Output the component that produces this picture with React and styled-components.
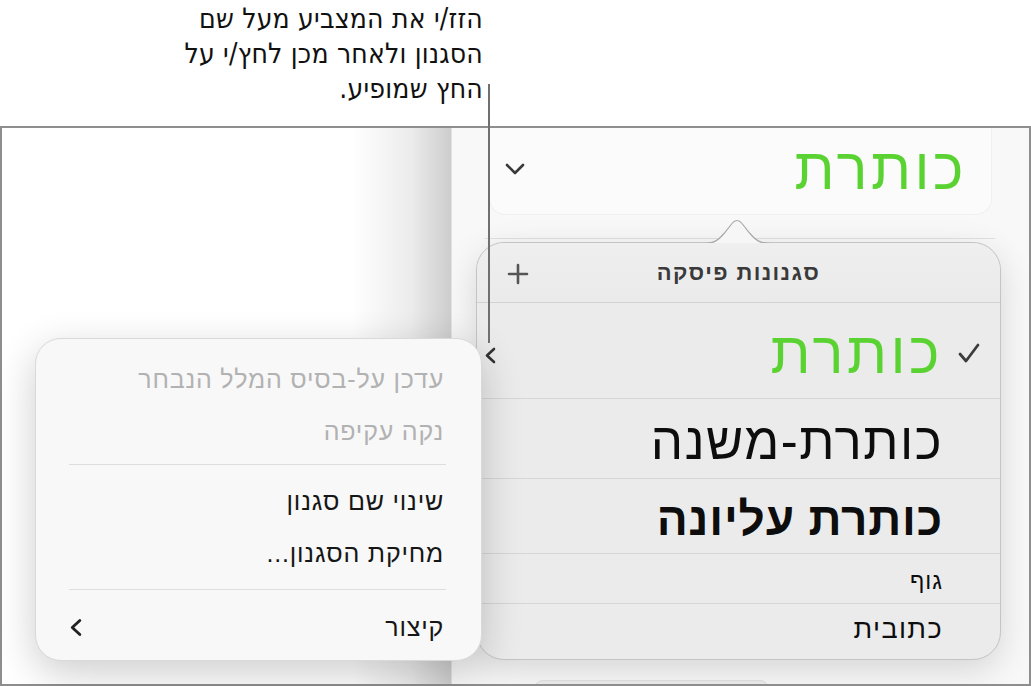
import styled, { createGlobalStyle } from 'styled-components';

const GlobalStyle = createGlobalStyle`
  html, body {
    margin: 0;
    padding: 0;
    background: #ffffff;
    overflow: hidden;
  }
  body {
    font-family: "Liberation Sans", Arial, sans-serif;
    color: #111;
  }
`;

const GREEN = '#5ad332';

const ChevronDown = () => (
  <svg width="20" height="12" viewBox="0 0 20 12">
    <polyline points="2,2 10,10 18,2" fill="none" stroke="#3a3a3a" strokeWidth="2.6" strokeLinecap="round" strokeLinejoin="round" />
  </svg>
);

const ChevronLeft = ({ w = 12, h = 17, color = '#333' }) => (
  <svg width={w} height={h} viewBox="0 0 12 17">
    <polyline points="10,2 3,8.5 10,15" fill="none" stroke={color} strokeWidth="2.6" strokeLinecap="round" strokeLinejoin="round" />
  </svg>
);

const Plus = () => (
  <svg width="22" height="22" viewBox="0 0 22 22">
    <path d="M11 2 V20 M2 11 H20" stroke="#555" strokeWidth="2.6" strokeLinecap="round" />
  </svg>
);

const Check = () => (
  <svg width="24" height="22" viewBox="0 0 24 22">
    <polyline points="3,12 9,19 21,3" fill="none" stroke="#3c3c3c" strokeWidth="2.8" strokeLinecap="round" strokeLinejoin="round" />
  </svg>
);

const PopArrow = () => (
  <svg width="68" height="27" viewBox="0 0 68 27">
    <path d="M0 26 C11 26 15 23 21 16 L29 6 C32 2 36 2 39 6 L47 16 C53 23 57 26 68 26 Z" fill="#f6f6f6" />
    <path d="M0 25.5 C11 25.5 15 22.5 21 15.5 L29 5.5 C32 1.5 36 1.5 39 5.5 L47 15.5 C53 22.5 57 25.5 68 25.5" fill="none" stroke="#a9a9a9" strokeWidth="1.2" />
  </svg>
);

function App() {
  return (
    <Page>
      <GlobalStyle />
      <Callout>
        <CalloutText dir="rtl">
          הזז/י את המצביע מעל שם
          <br />
          הסגנון ולאחר מכן לחץ/י על
          <br />
          החץ שמופיע.
        </CalloutText>
      </Callout>
      <Frame>
        <DocArea />
        <Sidebar>
          <StyleBox>
            <ChevronDown />
            <BoxTitle dir="rtl">כותרת</BoxTitle>
          </StyleBox>
          <SidebarRule />
          <StylesPopover>
            <ArrowHolder>
              <PopArrow />
            </ArrowHolder>
            <PopHeader>
              <HeaderPlus>
                <Plus />
              </HeaderPlus>
              <HeaderTitle dir="rtl">סגנונות פיסקה</HeaderTitle>
            </PopHeader>
            <StyleRow height={96}>
              <HoverChevron>
                <ChevronLeft />
              </HoverChevron>
              <StyleName dir="rtl" size={58} spacing={3.5} color={GREEN}>כותרת</StyleName>
              <CheckSlot>
                <Check />
              </CheckSlot>
            </StyleRow>
            <StyleRow height={80}>
              <StyleName dir="rtl" size={51} spacing={1.5}>כותרת-משנה</StyleName>
              <CheckSlot />
            </StyleRow>
            <StyleRow height={75}>
              <StyleName dir="rtl" size={46} spacing={0.8} weight={700}>כותרת עליונה</StyleName>
              <CheckSlot />
            </StyleRow>
            <StyleRow height={50}>
              <StyleName dir="rtl" size={23} spacing={1}>גוף</StyleName>
              <CheckSlot />
            </StyleRow>
            <StyleRow height={57} last>
              <StyleName dir="rtl" size={27} spacing={1.4}>כתובית</StyleName>
              <CheckSlot />
            </StyleRow>
          </StylesPopover>
          <BottomStub />
        </Sidebar>
        <ContextMenu>
          <MenuItem dir="rtl" disabled>עדכן על-בסיס המלל הנבחר</MenuItem>
          <MenuItem dir="rtl" disabled>נקה עקיפה</MenuItem>
          <MenuDivider top={7} bottom={10} />
          <MenuItem dir="rtl">שינוי שם סגנון</MenuItem>
          <MenuItem dir="rtl">מחיקת הסגנון...</MenuItem>
          <MenuDivider top={10} bottom={11} />
          <MenuItem dir="rtl">
            קיצור
            <ChevronLeft w={13} h={19} color="#222" />
          </MenuItem>
        </ContextMenu>
      </Frame>
      <Leader />
    </Page>
  );
}

export default App;

const Page = styled.div`
  position: relative;
  width: 1031px;
  height: 686px;
  overflow: hidden;
`;

const Callout = styled.div`
  height: 126px;
  box-sizing: border-box;
  padding-top: 1px;
`;

const CalloutText = styled.div`
  width: 483px;
  text-align: right;
  font-family: "DejaVu Sans Condensed", "Liberation Sans Narrow", "Liberation Sans", sans-serif;
  font-stretch: condensed;
  font-size: 28px;
  letter-spacing: 0.2px;
  line-height: 35px;
  color: #111;
`;

const Frame = styled.div`
  position: relative;
  display: flex;
  height: 560px;
  box-sizing: border-box;
  border: 2px solid #8e8e8e;
`;

const DocArea = styled.div`
  width: 449px;
  flex-shrink: 0;
  background: linear-gradient(90deg, #ffffff 0%, #ffffff 78%, #ececec 91%, #cdcdcd 100%);
`;

const Sidebar = styled.div`
  flex: 1;
  display: flex;
  flex-direction: column;
  background: #f8f8f8;
  border-left: 1px solid #e2e2e2;
  overflow: hidden;
`;

const StyleBox = styled.div`
  display: flex;
  align-items: center;
  justify-content: space-between;
  height: 87px;
  flex-shrink: 0;
  margin: 0 37px 0 37px;
  padding: 0 24px 4px 15px;
  box-sizing: border-box;
  background: #fbfbfb;
  border: 1px solid #f0f0f0;
  border-top: none;
  border-radius: 0 0 16px 16px;
`;

const BoxTitle = styled.div`
  font-size: 58px;
  letter-spacing: 3.5px;
  line-height: 1;
  color: ${GREEN};
`;

const SidebarRule = styled.div`
  height: 1px;
  flex-shrink: 0;
  margin: 23px 34px 0 33px;
  background: #e1e1e1;
`;

const StylesPopover = styled.div`
  position: relative;
  flex-shrink: 0;
  margin: 3px 28px 0 24px;
  height: 418px;
  box-sizing: border-box;
  background: #ebebeb;
  border: 1px solid #c4c4c4;
  border-radius: 28px;
  box-shadow: 0 10px 34px rgba(0, 0, 0, 0.14);
  display: flex;
  flex-direction: column;
`;

const ArrowHolder = styled.div`
  position: absolute;
  top: -25px;
  left: 226px;
  line-height: 0;
`;

const PopHeader = styled.div`
  position: relative;
  display: flex;
  align-items: center;
  justify-content: center;
  height: 59px;
  flex-shrink: 0;
  border-bottom: 1px solid #d3d3d3;
  background: linear-gradient(180deg, #efefef, #eaeaea);
  border-radius: 28px 28px 0 0;
`;

const HeaderPlus = styled.div`
  position: absolute;
  left: 30px;
  top: 20px;
  line-height: 0;
`;

const HeaderTitle = styled.div`
  font-size: 22px;
  letter-spacing: 1.4px;
  font-weight: 700;
  color: #3a3a3a;
`;

const StyleRow = styled.div`
  position: relative;
  display: flex;
  align-items: center;
  justify-content: flex-end;
  height: ${(p) => p.height}px;
  flex-shrink: 0;
  box-sizing: border-box;
  padding-top: ${(p) => (p.last ? 0 : 5)}px;
  padding-bottom: ${(p) => (p.last ? 6 : 0)}px;
  border-bottom: ${(p) => (p.last ? 'none' : '1px solid #d5d5d5')};
`;

const HoverChevron = styled.div`
  position: absolute;
  left: 7px;
  top: 44px;
  line-height: 0;
`;

const StyleName = styled.div`
  font-size: ${(p) => p.size}px;
  letter-spacing: ${(p) => p.spacing || 0}px;
  font-weight: ${(p) => p.weight || 400};
  color: ${(p) => p.color || '#0d0d0d'};
  line-height: 1;
  white-space: nowrap;
`;

const CheckSlot = styled.div`
  width: 57px;
  flex-shrink: 0;
  box-sizing: border-box;
  padding-left: 14px;
  line-height: 0;
`;

const BottomStub = styled.div`
  margin: 20px 0 0 82px;
  width: 233px;
  height: 12px;
  flex-shrink: 0;
  background: #eeeeee;
  border: 1px solid #e2e2e2;
  border-radius: 9px 9px 0 0;
`;

const ContextMenu = styled.div`
  position: absolute;
  left: 33px;
  top: 210px;
  width: 447px;
  height: 323px;
  box-sizing: border-box;
  padding: 14px 35px 9px 33px;
  background: #f8f8f8;
  border: 1px solid #d9d9d9;
  border-radius: 26px;
  box-shadow: 0 12px 40px rgba(0, 0, 0, 0.2);
  display: flex;
  flex-direction: column;
`;

const MenuItem = styled.div`
  display: flex;
  align-items: center;
  justify-content: space-between;
  height: 52px;
  flex-shrink: 0;
  padding-right: 2px;
  font-size: 25px;
  letter-spacing: 0.8px;
  color: ${(p) => (p.disabled ? '#b2b2b2' : '#161616')};
  white-space: nowrap;
`;

const MenuDivider = styled.div`
  height: 1px;
  flex-shrink: 0;
  margin: ${(p) => p.top}px 0 ${(p) => p.bottom}px;
  background: #dedede;
`;

const Leader = styled.div`
  position: absolute;
  left: 488px;
  top: 84px;
  width: 1.5px;
  height: 259px;
  background: #707070;
`;
